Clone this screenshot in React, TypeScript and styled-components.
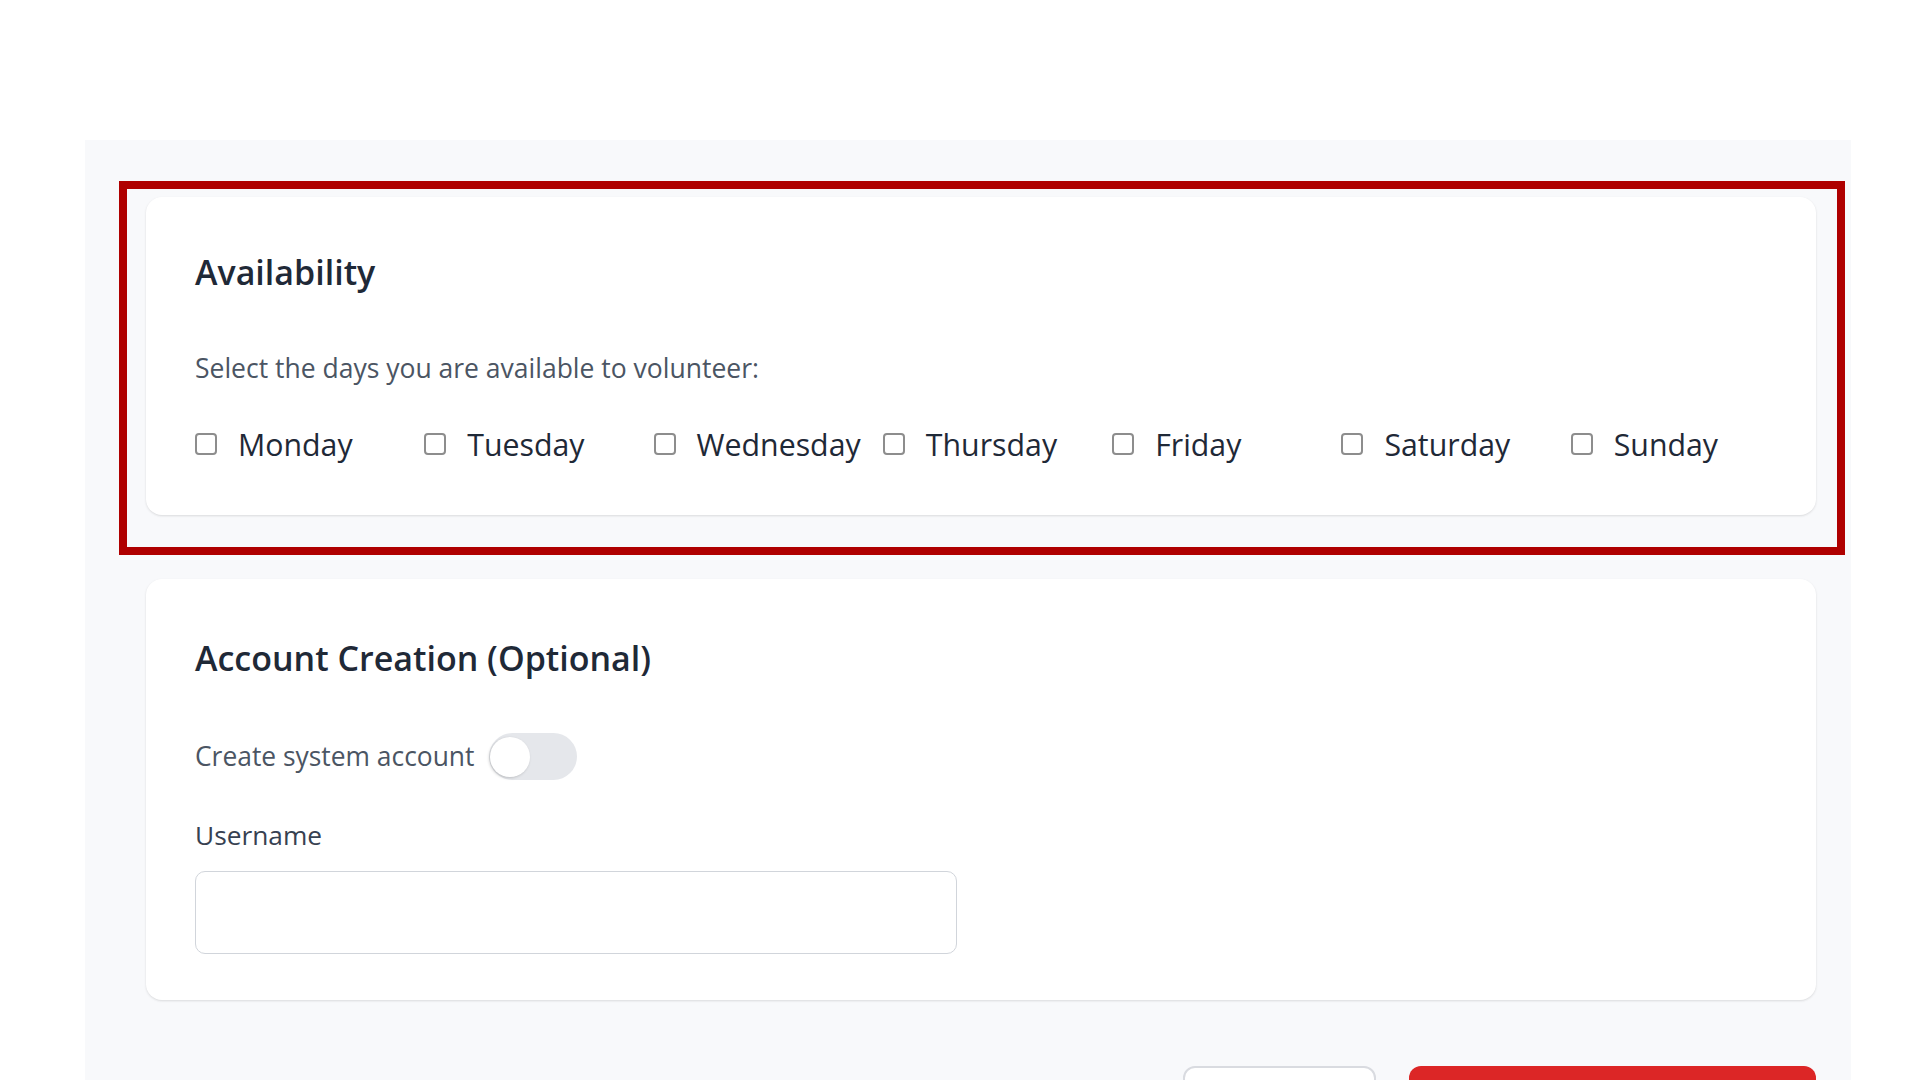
import React from "react";
import styled, { createGlobalStyle } from "styled-components";

const GlobalStyle = createGlobalStyle`
  html, body {
    margin: 0;
    padding: 0;
    background: #ffffff;
    font-family: "Open Sans", "Noto Sans", Arial, sans-serif;
  }
  * { box-sizing: border-box; }
`;

const Page = styled.div`
  padding: 140px 0 0 85px;
  width: 1851px;
`;

const Panel = styled.div`
  background: #f8f9fb;
  padding: 57px 35px 80px 61px;
  display: flex;
  flex-direction: column;
  gap: 64px;
`;

const HighlightWrap = styled.div`
  position: relative;
`;

const Highlight = styled.div`
  position: absolute;
  left: -27px;
  top: -16px;
  right: -29px;
  bottom: -40px;
  border: 8px solid #af0000;
  pointer-events: none;
`;

const Card = styled.section<{ $bottom: number }>`
  background: #ffffff;
  border-radius: 16px;
  box-shadow: 0 1px 3px rgba(0, 0, 0, 0.08), 0 1px 2px rgba(0, 0, 0, 0.05);
  padding: 57px 49px ${(p) => p.$bottom}px 49px;
  display: flex;
  flex-direction: column;
`;

const Title = styled.h2<{ $top: number; $gap: number }>`
  margin: ${(p) => p.$top}px 0 ${(p) => p.$gap}px 0;
  font-size: 34px;
  line-height: 37px;
  font-weight: 600;
  color: #1f2937;
`;

const Hint = styled.p`
  margin: 0 0 42px 0;
  font-size: 26.5px;
  line-height: 32px;
  color: #4b5563;
`;

const DayGrid = styled.div`
  display: grid;
  grid-template-columns: repeat(7, minmax(0, 1fr));
  column-gap: 33px;
  margin-bottom: 5px;
`;

const DayOption = styled.label`
  display: flex;
  align-items: center;
  gap: 21px;
  height: 36px;
  font-size: 30.3px;
  color: #1f2937;
  white-space: nowrap;
`;

const Box = styled.input`
  appearance: none;
  margin: 0;
  width: 22px;
  height: 22px;
  border: 2px solid #8d8d8d;
  border-radius: 4px;
  background: #fff;
  flex: none;
`;

const ToggleRow = styled.div`
  display: flex;
  align-items: center;
  gap: 15px;
  height: 48px;
  margin-bottom: 39px;
`;

const ToggleLabel = styled.span`
  font-size: 26.4px;
  line-height: 32px;
  color: #4b5563;
`;

const Track = styled.span`
  position: relative;
  display: inline-block;
  width: 88px;
  height: 47px;
  border-radius: 24px;
  background: #e5e7eb;
`;

const Knob = styled.span`
  position: absolute;
  left: 1px;
  top: 4px;
  width: 40px;
  height: 40px;
  border-radius: 50%;
  background: #ffffff;
  box-shadow: -1px 1px 3px rgba(0, 0, 0, 0.18);
`;

const FieldGrid = styled.div`
  display: grid;
  grid-template-columns: 1fr 1fr;
  column-gap: 48px;
`;

const Field = styled.div`
  display: flex;
  flex-direction: column;
  gap: 20px;
`;

const FieldLabel = styled.label`
  font-size: 26.3px;
  line-height: 32px;
  font-weight: 500;
  color: #374151;
`;

const TextInput = styled.input`
  height: 83px;
  border: 1.5px solid #d1d5db;
  border-radius: 10px;
  background: #fff;
  font-size: 22px;
  padding: 0 20px;
  font-family: inherit;
`;

const Actions = styled.div`
  display: flex;
  justify-content: flex-end;
  gap: 33px;
  margin-top: 2px;
`;

const Button = styled.button<{ $primary?: boolean }>`
  height: 64px;
  width: ${(p) => (p.$primary ? 407 : 193)}px;
  border-radius: 12px;
  border: ${(p) => (p.$primary ? "none" : "2px solid #d9dbe0")};
  background: ${(p) => (p.$primary ? "#dc2626" : "#ffffff")};
`;

const days = ["Monday", "Tuesday", "Wednesday", "Thursday", "Friday", "Saturday", "Sunday"];

export default function App() {
  return (
    <>
      <GlobalStyle />
      <Page>
        <Panel>
          <HighlightWrap>
            <Card $bottom={48}>
              <Title $top={0} $gap={61}>Availability</Title>
              <Hint>Select the days you are available to volunteer:</Hint>
              <DayGrid>
                {days.map((d) => (
                  <DayOption key={d}>
                    <Box type="checkbox" />
                    {d}
                  </DayOption>
                ))}
              </DayGrid>
            </Card>
            <Highlight />
          </HighlightWrap>
          <Card $bottom={46}>
            <Title $top={4} $gap={55}>Account Creation (Optional)</Title>
            <ToggleRow>
              <ToggleLabel>Create system account</ToggleLabel>
              <Track>
                <Knob />
              </Track>
            </ToggleRow>
            <FieldGrid>
              <Field>
                <FieldLabel>Username</FieldLabel>
                <TextInput type="text" />
              </Field>
            </FieldGrid>
          </Card>
          <Actions>
            <Button aria-label="Cancel" />
            <Button $primary aria-label="Submit" />
          </Actions>
        </Panel>
      </Page>
    </>
  );
}
